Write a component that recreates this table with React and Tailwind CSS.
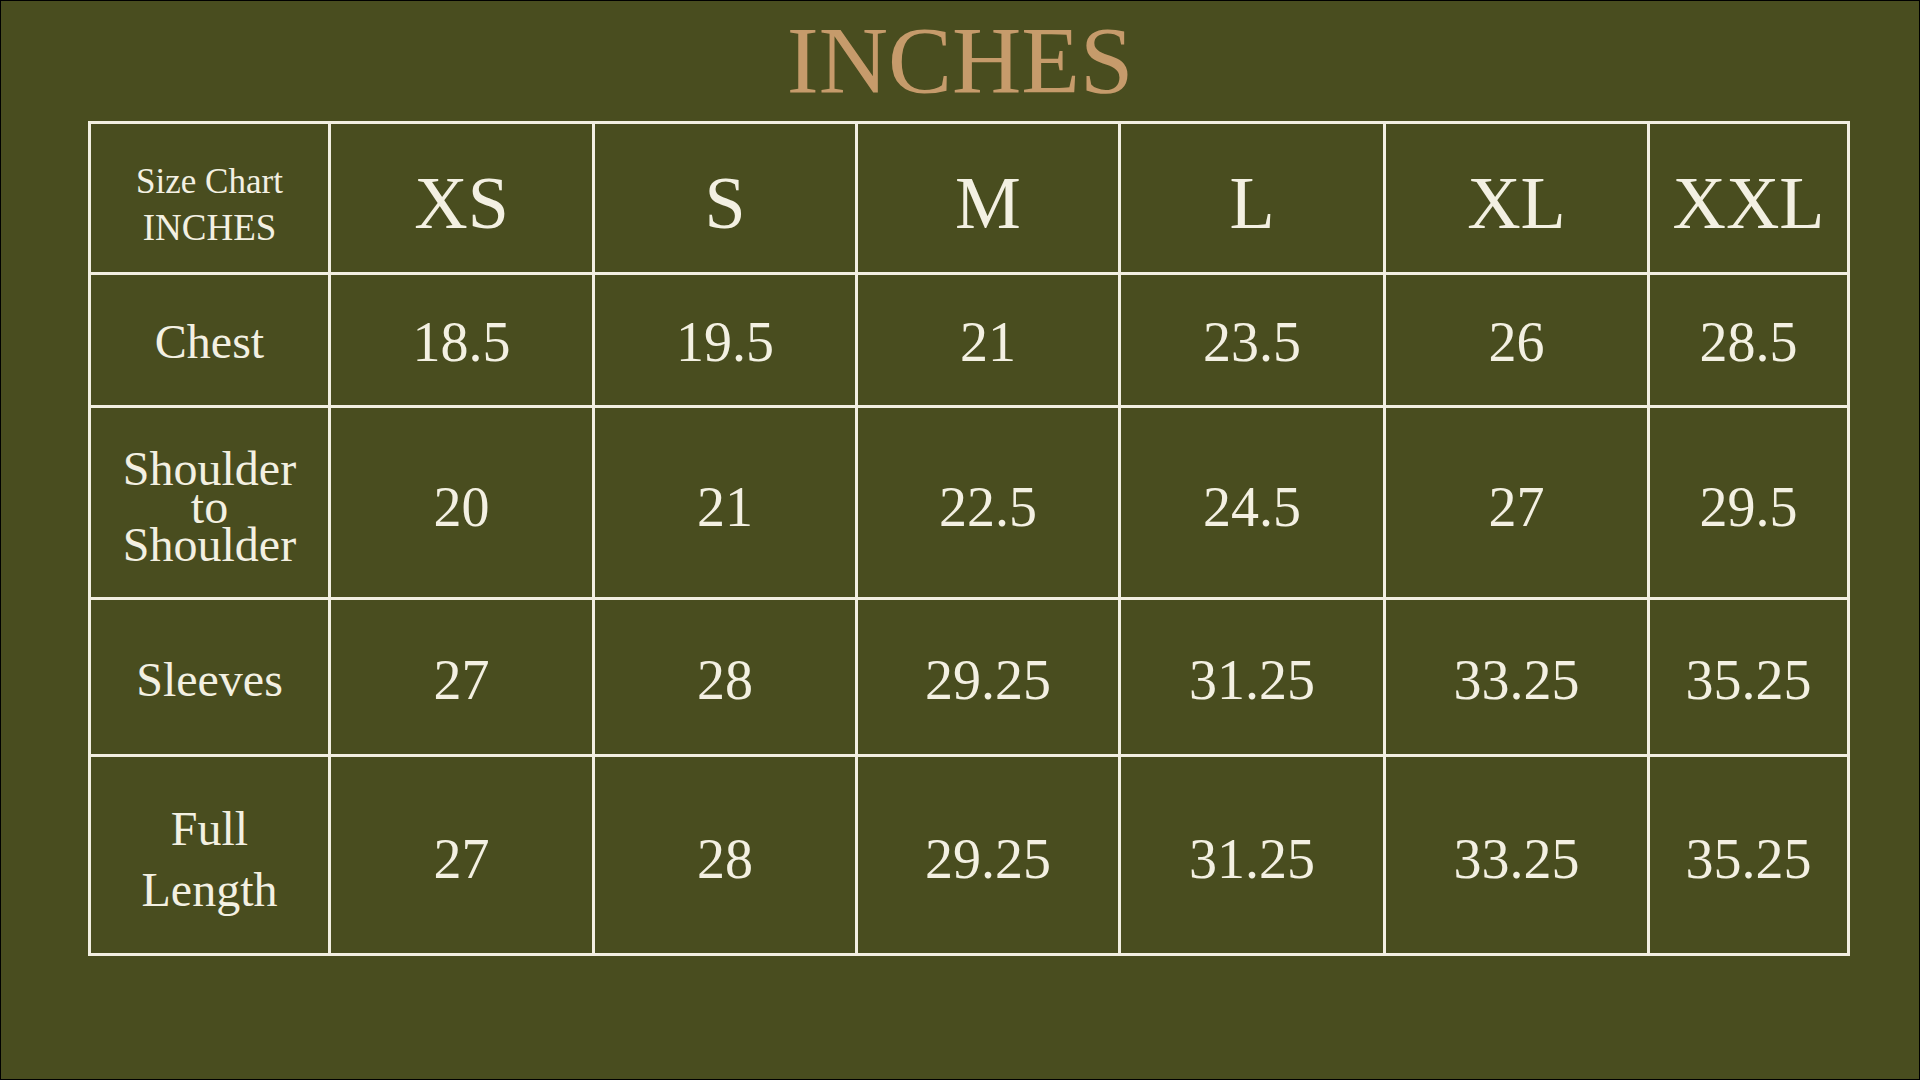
import React from "react";

const sizes = ["XS", "S", "M", "L", "XL", "XXL"];
const rows = [
  { label: ["Chest"], lh: "leading-none", pt: "pt-[3px]", vals: ["18.5", "19.5", "21", "23.5", "26", "28.5"] },
  { label: ["Shoulder", "to", "Shoulder"], lh: "leading-[38px]", pt: "pt-[8px]", vals: ["20", "21", "22.5", "24.5", "27", "29.5"] },
  { label: ["Sleeves"], lh: "leading-none", pt: "pt-[6px]", vals: ["27", "28", "29.25", "31.25", "33.25", "35.25"] },
  { label: ["Full", "Length"], lh: "leading-[61px]", pt: "pt-[8px]", vals: ["27", "28", "29.25", "31.25", "33.25", "35.25"] },
];

export default function App() {
  return (
    <div
      className="w-[1920px] h-[1080px] bg-[#494d1f] border border-black flex flex-col text-[#f3f0e2]"
      style={{ fontFamily: '"Liberation Serif", "Times New Roman", serif' }}
    >
      <div className="pt-[12px] text-center text-[96px] leading-none text-[#c69b6b]">INCHES</div>
      <div className="mt-[12px] ml-[87px] w-[1762px] grid grid-cols-[237px_261px_260px_260px_262px_261px_197px] grid-rows-[148px_130px_189px_154px_196px] gap-[3px] p-[3px] bg-[#f2efe1]">
        <div className="bg-[#494d1f] flex flex-col items-center justify-center pt-[14px] text-[35px] leading-[46px]">
          <span>Size Chart</span>
          <span className="text-[37px]">INCHES</span>
        </div>
        {sizes.map((s) => (
          <div key={s} className="bg-[#494d1f] flex items-center justify-center pt-[10px] text-[74px] leading-none">
            {s}
          </div>
        ))}
        {rows.map((r, i) => (
          <React.Fragment key={i}>
            <div className={`bg-[#494d1f] flex flex-col items-center justify-center text-[48px] ${r.lh} ${r.pt}`}>
              {r.label.map((l, j) => (
                <span key={j}>{l}</span>
              ))}
            </div>
            {r.vals.map((v, j) => (
              <div key={j} className={`bg-[#494d1f] flex items-center justify-center text-[56px] leading-none ${r.pt}`}>
                {v}
              </div>
            ))}
          </React.Fragment>
        ))}
      </div>
    </div>
  );
}
